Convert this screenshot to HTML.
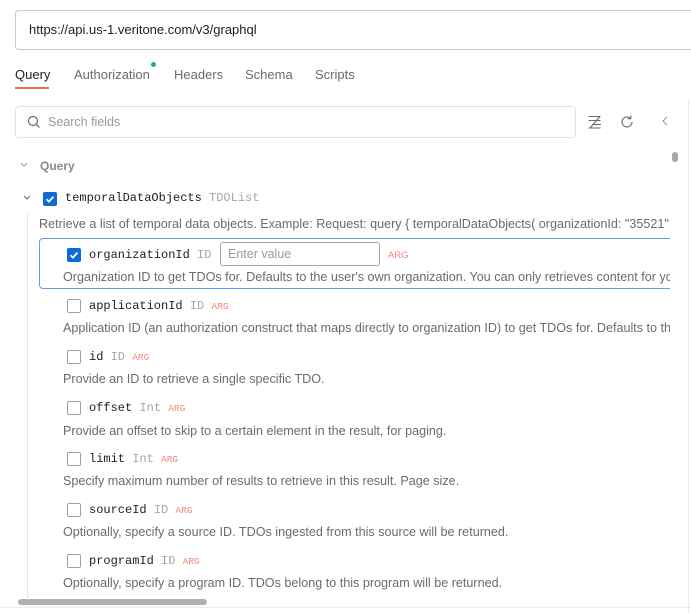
<!DOCTYPE html>
<html><head><meta charset="utf-8"><style>
*{box-sizing:border-box;margin:0;padding:0}
body{width:691px;height:613px;background:#fff;position:relative;overflow:hidden;font-family:"Liberation Sans",sans-serif;color:#212121}
.a{position:absolute;white-space:nowrap}
.url{left:15px;top:10px;width:690px;height:40px;border:1px solid #c9c9c9;border-radius:4px;font-size:13px;padding:11px 13px;color:#212121}
.tab{top:67px;font-size:13px;color:#6b6b6b}
.search{left:15px;top:106px;width:561px;height:32px;border:1px solid #e2e2e2;border-radius:4px}
.mono{font-family:"Liberation Mono",monospace;font-size:12px;color:#212121}
.t{font-family:"Liberation Mono",monospace;font-size:12px;color:#a6a6a6}
.arg{font-size:9.5px;color:#f08a78}
.desc{font-size:12.6px;color:#6b6b6b}
.cb{width:14px;height:14px;border:1px solid #a0a0a0;border-radius:2px;background:#fff}
.cbc{width:14px;height:14px;border-radius:2px;background:#0c6bd6}
.clip{position:absolute;left:0;top:0;width:670px;height:613px;overflow:hidden}
</style></head><body>
<div class="a url">https://api.us-1.veritone.com/v3/graphql</div>
<div class="a tab" style="left:15px;color:#212121">Query</div>
<div class="a" style="left:15px;top:87px;width:34px;height:2px;background:#f26b3a"></div>
<div class="a tab" style="left:74px">Authorization</div>
<div class="a" style="left:151px;top:62px;width:5px;height:5px;border-radius:50%;background:#16b757"></div>
<div class="a tab" style="left:174px">Headers</div>
<div class="a tab" style="left:245px">Schema</div>
<div class="a tab" style="left:315px">Scripts</div>
<div class="a search"></div>
<svg class="a" style="left:27px;top:115px" width="14" height="14" viewBox="0 0 14 14"><circle cx="6" cy="6" r="4.5" fill="none" stroke="#6b6b6b" stroke-width="1.2"/><path d="M9.3 9.3L12.5 12.5" stroke="#6b6b6b" stroke-width="1.2"/></svg>
<div class="a" style="left:48px;top:115px;font-size:12.5px;color:#9a9a9a">Search fields</div>
<svg class="a" style="left:587px;top:114px" width="16" height="16" viewBox="0 0 16 16" fill="none" stroke="#6b6b6b" stroke-width="1.1"><path d="M1.5 2.5h12M1.5 6.5h12M5 10.5h9M1.5 14h12M13 2.5L3 14"/></svg>
<svg class="a" style="left:619px;top:114px" width="16" height="16" viewBox="0 0 16 16" fill="none" stroke="#6b6b6b" stroke-width="1.1"><path d="M13 8a5 5 0 1 1-1.6-3.7"/><path d="M11.8 1.5v3.2h-3.2"/></svg>
<svg class="a" style="left:660px;top:115px" width="10" height="12" viewBox="0 0 10 12"><path d="M7 2L3 6l4 4" fill="none" stroke="#9a9a9a" stroke-width="1.1"/></svg>
<div class="a" style="left:688px;top:100px;width:1px;height:513px;background:#ececec"></div>
<div class="a" style="left:672px;top:152px;width:6px;height:10px;border-radius:3px;background:#a8a8a8"></div>
<div class="a" style="left:0;top:607px;width:691px;height:1px;background:#ececec"></div>
<div class="a" style="left:18px;top:599px;width:189px;height:6px;border-radius:3px;background:#b0b0b0"></div>
<div class="clip">
<svg class="a" style="left:19px;top:161px" width="10" height="8" viewBox="0 0 10 8"><path d="M2 2l3 3 3-3" fill="none" stroke="#9a9a9a" stroke-width="1"/></svg>
<div class="a" style="left:40px;top:159px;font-size:12px;color:#8a8a8a;font-weight:bold">Query</div>
<svg class="a" style="left:22px;top:194px" width="10" height="8" viewBox="0 0 10 8"><path d="M2 2l3 3 3-3" fill="none" stroke="#6b6b6b" stroke-width="1"/></svg>
<div class="a cbc" style="left:43px;top:192px"></div>
<svg class="a" style="left:43px;top:192px" width="14" height="14" viewBox="0 0 14 14"><path d="M3.5 7.2l2.4 2.4 4.6-5" fill="none" stroke="#fff" stroke-width="1.8"/></svg>
<div class="a mono" style="left:65px;top:191px">temporalDataObjects <span class="t">TDOList</span></div>
<div class="a" style="left:27px;top:213px;width:1px;height:387px;background:#e6e6e6"></div>
<div class="a desc" style="left:39px;top:217px">Retrieve a list of temporal data objects. Example: Request: query { temporalDataObjects( organizationId: "35521" limit: 10) {</div>
<div class="a" style="left:39px;top:238px;width:700px;height:51px;border:1px solid #5f9fe9;border-radius:4px"></div>
<div class="a cbc" style="left:67px;top:248px"></div>
<svg class="a" style="left:67px;top:248px" width="14" height="14" viewBox="0 0 14 14"><path d="M3.5 7.2l2.4 2.4 4.6-5" fill="none" stroke="#fff" stroke-width="1.8"/></svg>
<div class="a mono" style="left:89px;top:248px">organizationId <span class="t">ID</span></div>
<div class="a" style="left:220px;top:242px;width:160px;height:24px;border:1px solid #a6a6a6;border-radius:3px;font-size:12.5px;color:#9a9a9a;padding:4px 7px">Enter value</div>
<div class="a arg" style="left:388px;top:250px">ARG</div>
<div class="a desc" style="left:63px;top:270px">Organization ID to get TDOs for. Defaults to the user's own organization. You can only retrieves content for your own organization.</div>

<div class="a cb" style="left:67px;top:299px"></div>
<div class="a mono" style="left:89px;top:299px">applicationId <span class="t">ID</span> <span class="arg">ARG</span></div>
<div class="a desc" style="left:63px;top:321px">Application ID (an authorization construct that maps directly to organization ID) to get TDOs for. Defaults to the user's own.</div>

<div class="a cb" style="left:67px;top:350px"></div>
<div class="a mono" style="left:89px;top:350px">id <span class="t">ID</span> <span class="arg">ARG</span></div>
<div class="a desc" style="left:63px;top:372px">Provide an ID to retrieve a single specific TDO.</div>

<div class="a cb" style="left:67px;top:401px"></div>
<div class="a mono" style="left:89px;top:401px">offset <span class="t">Int</span> <span class="arg">ARG</span></div>
<div class="a desc" style="left:63px;top:424px">Provide an offset to skip to a certain element in the result, for paging.</div>

<div class="a cb" style="left:67px;top:452px"></div>
<div class="a mono" style="left:89px;top:452px">limit <span class="t">Int</span> <span class="arg">ARG</span></div>
<div class="a desc" style="left:63px;top:474px">Specify maximum number of results to retrieve in this result. Page size.</div>

<div class="a cb" style="left:67px;top:503px"></div>
<div class="a mono" style="left:89px;top:503px">sourceId <span class="t">ID</span> <span class="arg">ARG</span></div>
<div class="a desc" style="left:63px;top:525px">Optionally, specify a source ID. TDOs ingested from this source will be returned.</div>

<div class="a cb" style="left:67px;top:554px"></div>
<div class="a mono" style="left:89px;top:554px">programId <span class="t">ID</span> <span class="arg">ARG</span></div>
<div class="a desc" style="left:63px;top:576px">Optionally, specify a program ID. TDOs belong to this program will be returned.</div>
</div>
</body></html>
